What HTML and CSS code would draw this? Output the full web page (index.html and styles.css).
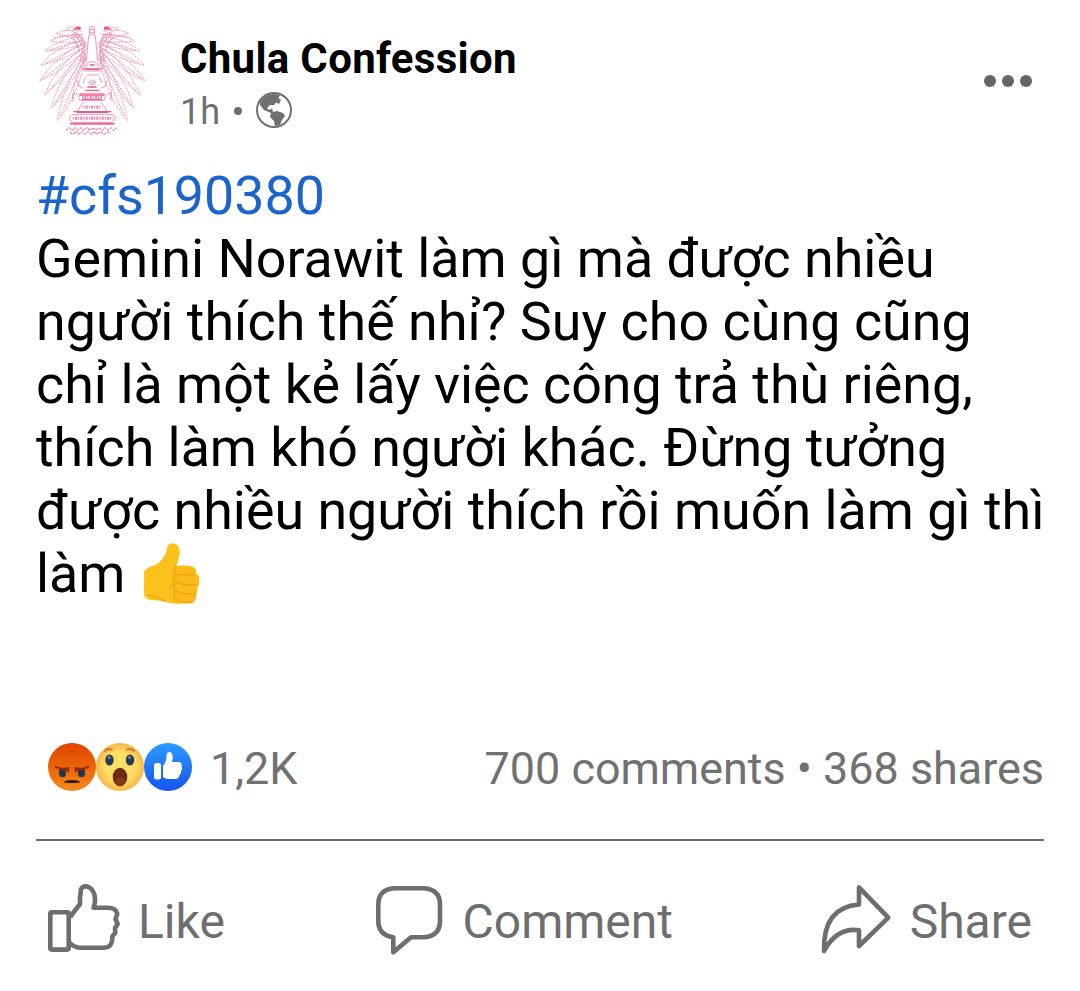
FILE: index.html
```html
<!DOCTYPE html>
<html lang="vi">
<head>
    <meta charset="UTF-8">
    <meta name="viewport" content="width=device-width, initial-scale=1.0">
    <title>Chula Confession</title>
    <link rel="stylesheet" href="styles.css">
</head>
<body>
    <div class="post">
        <div class="header">
            <svg class="avatar" viewBox="0 0 375 390">
                <defs>
                    <g id="wing">
                        <path class="root" d="M134 54Q152 62 166 86L160 150M128 56Q150 76 160 96L150 140M124 68Q144 84 148 112"/>
                        <path d="M150 42Q125 30 108 42Q130 50 158 62M154 50Q110 40 78 55Q110 66 162 70M156 60Q100 55 60 78Q100 84 164 80"/>
                        <path d="M158 66Q90 70 44 108Q100 104 165 88M160 76Q80 92 32 150Q90 140 166 96M162 86Q80 120 29 198Q90 172 167 104"/>
                        <path d="M163 96Q80 150 44 240Q100 195 168 112M164 106Q90 180 63 280Q115 230 168 122M166 116Q100 210 82 316Q132 265 168 135"/>
                        <path d="M162 132Q128 195 128 262M158 58L70 68M160 74L60 105M162 84L46 146M164 94L40 190M165 104L54 230M167 116L72 270M168 128L90 304"/>
                    </g>
                </defs>
                <use href="#wing" class="feather"/>
                <use href="#wing" class="feather" transform="translate(374 0) scale(-1 1)"/>
                <path class="wing-top" d="M130 42h22M244 42h-22M138 36l14 2M236 36l-14 2"/>
                <path class="crown" d="M178 60v-22q8-8 16 0v22zM178 44h16M178 52h16M176 62l-7 76M196 62l7 76"/>
                <path class="crown" d="M155 160h62M168 158q2-18 18-18t20 18M164 168h44M170 180h36M166 186l-6 18M208 186l8 18M150 152l12 16M222 152l-12 16"/>
                <path class="crown ink" d="M163 163h46M180 150h14M166 226h42M172 216h28"/>
                <path class="crown" d="M176 202q11-14 22 0q-11 14-22 0M182 202h10M140 196q10 8 4 16l16 8M232 196q-10 8-4 16l-16 8"/>
                <path class="crown" d="M150 235h72q8 10 0 22h-72q-8-10 0-22M142 240q-18-14-12 14M230 240q18-14 12 14M158 262l-16 28M214 262l18 28"/>
                <path class="crown ink" d="M150 240h72M156 253h60M130 290h114"/>
                <path class="crown" d="M128 298h118q20 12 0 24h-118q-20-12 0-24M122 328h130"/>
                <path class="braid" d="M128 310h120M160 276h52M156 246h60"/>
                <path class="lotus" d="M108 346l9-8l9 8l9-8l9 8l9-8l9 8l9-8l9 8l9-8l9 8l9-8l9 8l9-8l9 8l9-8l9 8l9-8M120 352l8 6l10-8l8 8l10-8l8 8l10-8l10 8l10-8l8 8l10-8l10 8l10-8l8 6"/>
                <path class="crown ink" d="M140 292h94M120 326h134"/>
            </svg>
            <div class="author">
                <div class="name">Chula Confession</div>
                <div class="meta">
                    <span>1h</span>
                    <span class="dot"></span>
                    <svg class="globe" viewBox="0 0 36 36">
                        <circle cx="18" cy="18" r="17"/>
                        <path d="M4 10Q10 1 19 2L24 3L22.500 6L25 8L23 12L20 10.500L18 13L14 13L11 16L13 18L16 16.500L17 20L21 19L27 21L29 24L26 28L24 33L19 34L18 29L14 25L15 21L8 18L4 13Z"/>
                    </svg>
                </div>
            </div>
            <div class="more"><i></i><i></i><i></i></div>
        </div>

        <div class="content">
            <a class="hashtag">#cfs190380</a><br>
            Gemini Norawit làm gì mà được nhiều<br>
            <span class="loose">người thích thế nhỉ? Suy cho cùng cũng</span><br>
            chỉ là một kẻ lấy việc công trả thù riêng,<br>
            thích làm khó người khác. Đừng tưởng<br>
            được nhiều người thích rồi muốn làm gì thì<br>
            làm
            <svg class="emoji" viewBox="0 0 56 60">
                <path fill="#fcc21b" d="M1 28Q5 23 12 22Q20 17 23 8Q23 1 29 0Q37 1 36 11L33 23Q39 21 48 23Q53 25 52 30Q56 32 55 37Q56 41 53 44Q54 49 52 51Q53 57 48 59Q31 61 22 58Q15 56 8 56Q2 56 1 51Z"/>
                <path fill="#fbba18" d="M31 24Q34 22 48 23Q53 25 52 30Q56 32 55 37Q56 41 53 44Q54 49 52 51Q53 57 48 59Q37 60 33 56Q27 52 31 47Q27 43 31 38Q27 34 31 30Z"/>
                <path fill="none" stroke="#eda310" stroke-width="1.2" d="M33 23Q29 25 31 30Q33 32 51 31M31 31Q28 36 33 39Q40 42 53 41M31 40Q29 47 34 48Q42 51 52 50M31 48Q29 56 37 58Q45 59 49 58M31 38Q29 43 25 44M5 51Q12 53 22 57"/>
            </svg>
        </div>

        <div class="stats">
            <div class="reactions">
                <svg viewBox="0 0 48 48">
                    <defs>
                        <linearGradient id="angry" x1="0" y1="0" x2="0" y2="1"><stop offset="0" stop-color="#e04300"/><stop offset=".6" stop-color="#ee6b0b"/><stop offset="1" stop-color="#f58b1c"/></linearGradient>
                        <radialGradient id="wow"><stop offset="0" stop-color="#ffe36b"/><stop offset=".65" stop-color="#ffdc61"/><stop offset="1" stop-color="#f8b54b"/></radialGradient>
                        <linearGradient id="blue" x1="0" y1="0" x2="0" y2="1"><stop offset="0" stop-color="#2c9cff"/><stop offset="1" stop-color="#1554ee"/></linearGradient>
                    </defs>
                    <circle cx="24" cy="24" r="24" fill="url(#angry)"/>
                    <ellipse cx="14.5" cy="30" rx="3.6" ry="4.2" fill="#25334b"/>
                    <ellipse cx="33.5" cy="30" rx="3.6" ry="4.2" fill="#25334b"/>
                    <path d="M8 24Q14 27 20 25.500V28M40 24Q34 27 28 25.500V28" fill="none" stroke="#8c2d05" stroke-width="2.500" stroke-linecap="round"/>
                    <path d="M16 39.500Q16 37 24 37T32 39.500Q24 40.500 16 39.500Z" fill="#321a12"/>
                </svg>
                <svg viewBox="0 0 48 48">
                    <circle cx="24" cy="24" r="24" fill="url(#wow)"/>
                    <ellipse cx="13.500" cy="17" rx="4.200" ry="5.600" fill="#2a3b55"/>
                    <ellipse cx="34" cy="17" rx="4.200" ry="5.600" fill="#2a3b55"/>
                    <circle cx="13" cy="14.500" r="1.500" fill="#6c82a0"/>
                    <circle cx="33.500" cy="14.500" r="1.500" fill="#6c82a0"/>
                    <path d="M9 8Q11 5 16 6.500M31 6.500Q36 5 38 8" fill="none" stroke="#e0761a" stroke-width="2" stroke-linecap="round"/>
                    <ellipse cx="24" cy="34" rx="7.300" ry="9.300" fill="#6b2c10"/>
                    <ellipse cx="24" cy="38.500" rx="5" ry="4" fill="#853a19"/>
                </svg>
                <svg viewBox="0 0 48 48">
                    <circle cx="24" cy="24" r="24" fill="url(#blue)"/>
                    <rect x="10" y="20" width="7" height="16.500" rx="2.500" fill="#fff"/>
                    <path d="M19 23Q23 18 22.500 12Q23 8.500 26 9Q30 11 28 19H35Q38.500 20 37.500 23Q39 26 37 28Q37.500 31 35.500 32Q35 36 31 36H24Q21 36 19 34Z" fill="#fff"/>
                </svg>
                <span class="total">1,2K</span>
            </div>
            <div class="counts">700 comments • 368 shares</div>
        </div>

        <div class="actions">
            <div class="action">
                <svg class="like-icon" viewBox="0 0 76 76">
                    <rect x="4.300" y="30.300" width="18.400" height="37.300" rx="1.500"/>
                    <path d="M23 34.500Q26 34 27 31L34 22V15Q35 10 34.700 8Q36 4.300 40 4.300Q46 5 48.500 13Q50 19 47.500 25.700H62Q70 25.700 71.300 32L69.500 37L71.700 42L69 46L69.300 51L66.500 54L66 59Q65 65.700 58 65.700H34Q28 65.700 23 60"/>
                </svg>
                <span>Like</span>
            </div>
            <div class="action comment">
                <svg class="comment-icon" viewBox="0 0 76 76">
                    <path d="M21 6.300H51Q67 7.500 67 22.500V39Q67 54 51 55.300H38L20.300 70.300V55.300Q5.300 53 5.300 39V22.500Q5.300 7.500 21 6.300Z"/>
                </svg>
                <span>Comment</span>
            </div>
            <div class="action">
                <svg class="share-icon" viewBox="0 0 76 76">
                    <path d="M41 5.300L70.300 35.700L41 64V48.300Q19 45 6 69Q5 25 41 22.500Z"/>
                </svg>
                <span>Share</span>
            </div>
        </div>
    </div>
</body>
</html>
```

FILE: styles.css
```css
* {
    box-sizing: border-box;
}

body {
    margin: 0;
    background: #fff;
    font-family: Roboto, "Liberation Sans", sans-serif;
    color: #000;
}

.post {
    width: 1080px;
    height: 991px;
    padding: 15px 36px 0;
}

.header {
    display: flex;
    height: 149px;
}

.avatar {
    width: 125px;
    height: 130px;
    margin-left: -6px;
    flex: none;
    fill: none;
    stroke: #ee7da5;
}

.feather {
    stroke: #f08fb1;
    stroke-width: 3;
    stroke-dasharray: 5 3;
}

.root {
    stroke: #ee7da5;
    stroke-width: 5;
    stroke-dasharray: 4 3;
}

.wing-top {
    stroke: #e5578a;
    stroke-width: 5;
}

.crown {
    stroke-width: 2.5;
}

.ink {
    stroke: #e85b8d;
    stroke-width: 4;
}

.braid {
    stroke-width: 9;
    stroke-dasharray: 3 4 6 3;
}

.lotus {
    stroke-width: 3.5;
    stroke-dasharray: 8 3;
}

.author {
    margin-left: 25px;
    padding-top: 19px;
}

.name {
    font-size: 42px;
    font-weight: 700;
    line-height: 50px;
    letter-spacing: 0.3px;
    white-space: nowrap;
}

.meta {
    display: flex;
    align-items: center;
    height: 52px;
    font-size: 36px;
    color: #6e6f71;
}

.meta span:first-child {
    padding-top: 3px;
}

.dot {
    width: 8px;
    height: 8px;
    margin: 2px 14px 0;
    border-radius: 50%;
    background: #6e6f71;
}

.globe {
    width: 36px;
    height: 36px;
    fill: #6e6f71;
}

.globe circle {
    fill: none;
    stroke: #6e6f71;
    stroke-width: 2;
}

.more {
    display: flex;
    gap: 6px;
    margin: 60px 12px 0 auto;
}

.more i {
    width: 12px;
    height: 12px;
    border-radius: 50%;
    background: #646567;
}

.content {
    height: 561px;
    font-size: 53.75px;
    line-height: 63px;
    white-space: nowrap;
}

.loose {
    letter-spacing: 0.08px;
}

.hashtag {
    color: #1b63cd;
}

.emoji {
    width: 57px;
    height: 61px;
    margin-left: 4px;
    vertical-align: -12px;
}

.stats {
    display: flex;
    align-items: center;
    justify-content: space-between;
    height: 84px;
    font-size: 44.9px;
    color: #707173;
}

.reactions {
    display: flex;
    align-items: center;
    padding-left: 12px;
}

.reactions svg {
    width: 48px;
    height: 48px;
}

.total,
.counts {
    padding-top: 2px;
}

.total {
    margin-left: 18px;
}

.actions {
    display: flex;
    justify-content: space-between;
    margin-top: 30px;
    padding: 41px 12px 0 10px;
    border-top: 2px solid #6b6c6e;
}

.action {
    display: flex;
    align-items: center;
    gap: 16px;
    height: 76px;
    font-size: 48px;
    color: #6d6e70;
}

.action span {
    padding-top: 2px;
}

.comment {
    gap: 14px;
    padding-left: 3px;
}

.action svg {
    width: 76px;
    height: 76px;
    fill: none;
    stroke: #6d6e70;
    stroke-width: 4.6;
    stroke-linejoin: round;
}
```
